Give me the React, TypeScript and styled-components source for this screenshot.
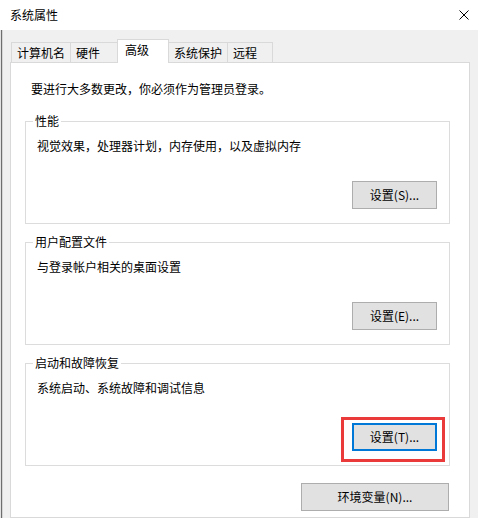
import React from "react";
import styled, { createGlobalStyle } from "styled-components";

const GlobalStyle = createGlobalStyle`
  html, body { margin: 0; padding: 0; background: #f0f0f0; }
  body {
    font-family: "Noto Sans CJK SC", "Microsoft YaHei", "Liberation Sans", sans-serif;
    font-size: 12px;
    color: #000;
  }
  * { box-sizing: border-box; }
`;

const Window = styled.div`
  width: 478px;
  height: 518px;
  overflow: hidden;
  display: flex;
  flex-direction: column;
  background: #f0f0f0;
`;

const TitleBar = styled.div`
  height: 30px;
  flex-shrink: 0;
  background: #fff;
  display: flex;
  align-items: center;
  justify-content: space-between;
  padding: 0 9px 0 10px;
`;

const Title = styled.span`
  line-height: 16px;
  margin-top: -1px;
`;

const CloseButton = styled.span`
  display: flex;
  width: 10px;
  height: 10px;
  margin-top: -1px;
`;

const Body = styled.div`
  flex: 1;
  display: flex;
  min-height: 0;
`;

const EdgeStrip = styled.div`
  width: 3px;
  flex-shrink: 0;
  background: linear-gradient(
    to right,
    #e2e2e2 0 1px,
    #6e6e6e 1px 2px,
    #d6d6d6 2px 3px
  );
`;

const Content = styled.div`
  flex: 1;
  display: flex;
  flex-direction: column;
  padding: 9px 8px 0 7px;
  min-width: 0;
`;

const TabRow = styled.div`
  display: flex;
  align-items: flex-end;
  height: 23px;
  padding-left: 1px;
  position: relative;
  z-index: 1;
`;

const Tab = styled.div<{ $w: number; $active?: boolean }>`
  width: ${(p) => p.$w}px;
  height: ${(p) => (p.$active ? 24 : 20)}px;
  margin-bottom: ${(p) => (p.$active ? -1 : 0)}px;
  margin-left: -1px;
  &:first-child { margin-left: 0; }
  border: 1px solid #d9d9d9;
  border-bottom: none;
  background: ${(p) => (p.$active ? "#fff" : "#f0f0f0")};
  padding: 2px 0 0 ${(p) => (p.$active ? 7 : 5)}px;
  line-height: 16px;
  white-space: nowrap;
  position: relative;
  z-index: ${(p) => (p.$active ? 2 : 1)};
`;

const Panel = styled.div`
  flex: 1;
  background: #fff;
  border: 1px solid #d9d9d9;
  padding: 18px 0 0 14px;
  display: flex;
  flex-direction: column;
`;

const Notice = styled.div`
  line-height: 16px;
  padding-left: 6px;
  margin-bottom: 24px;
`;

const Groups = styled.div`
  display: flex;
  flex-direction: column;
  gap: 18px;
  width: 425px;
`;

const Group = styled.div`
  position: relative;
  width: 425px;
  height: 103px;
  border: 1px solid #dcdcdc;
  padding: 16px 12px 14px 11px;
  display: flex;
  flex-direction: column;
  justify-content: space-between;
`;

const Legend = styled.span`
  position: absolute;
  top: -9px;
  left: 7px;
  padding: 0 2px;
  background: #fff;
  line-height: 16px;
`;

const Description = styled.div`
  line-height: 16px;
`;

const ButtonSlot = styled.div`
  align-self: flex-end;
  position: relative;
  display: flex;
`;

const Button = styled.button<{ $w?: number; $focused?: boolean }>`
  width: ${(p) => p.$w ?? 85}px;
  height: 28px;
  margin: 0;
  padding: 0;
  background: #e1e1e1;
  border: ${(p) => (p.$focused ? "2px solid #0078d7" : "1px solid #adadad")};
  font-family: inherit;
  font-size: 12px;
  color: #000;
  line-height: 16px;
  display: flex;
  align-items: center;
  justify-content: center;
`;

const Highlight = styled.span`
  position: absolute;
  left: -11px;
  top: -6px;
  right: -8px;
  bottom: -11px;
  border: 3px solid #eb3a3a;
  pointer-events: none;
`;

const Footer = styled.div`
  width: 425px;
  display: flex;
  justify-content: flex-end;
  padding-right: 1px;
  margin-top: 17px;
`;

const tabs = [
  { label: "计算机名", w: 60 },
  { label: "硬件", w: 48 },
  { label: "高级", w: 52, active: true },
  { label: "系统保护", w: 60 },
  { label: "远程", w: 46 },
];

const groups = [
  { title: "性能", desc: "视觉效果，处理器计划，内存使用，以及虚拟内存", btn: "设置(S)..." },
  { title: "用户配置文件", desc: "与登录帐户相关的桌面设置", btn: "设置(E)..." },
  { title: "启动和故障恢复", desc: "系统启动、系统故障和调试信息", btn: "设置(T)...", focused: true },
];

export default function App() {
  return (
    <>
      <GlobalStyle />
      <Window>
        <TitleBar>
          <Title>系统属性</Title>
          <CloseButton>
            <svg width="10" height="10" viewBox="0 0 10 10">
              <path d="M0.5 0.5 L9.5 9.5 M9.5 0.5 L0.5 9.5" stroke="#000" strokeWidth="1" fill="none" />
            </svg>
          </CloseButton>
        </TitleBar>
        <Body>
          <EdgeStrip />
          <Content>
            <TabRow>
              {tabs.map((t) => (
                <Tab key={t.label} $w={t.w} $active={t.active}>
                  {t.label}
                </Tab>
              ))}
            </TabRow>
            <Panel>
              <Notice>要进行大多数更改，你必须作为管理员登录。</Notice>
              <Groups>
                {groups.map((g) => (
                  <Group key={g.title}>
                    <Legend>{g.title}</Legend>
                    <Description>{g.desc}</Description>
                    <ButtonSlot>
                      <Button $focused={g.focused}>{g.btn}</Button>
                      {g.focused && <Highlight />}
                    </ButtonSlot>
                  </Group>
                ))}
              </Groups>
              <Footer>
                <Button $w={148}>环境变量(N)...</Button>
              </Footer>
            </Panel>
          </Content>
        </Body>
      </Window>
    </>
  );
}
